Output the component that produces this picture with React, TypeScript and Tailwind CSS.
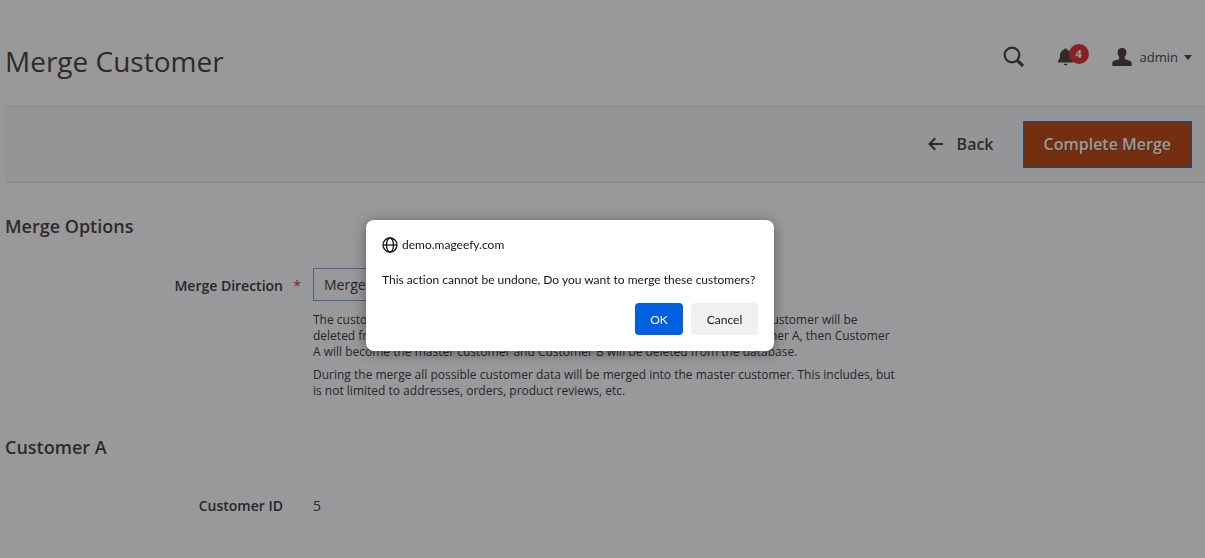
import { useState } from "react";

const SearchIcon = () => (
  <svg width="22" height="22" viewBox="0 0 22 22" fill="none" stroke="currentColor" aria-hidden="true">
    <circle cx="9" cy="9" r="7.3" strokeWidth="2.2" />
    <path d="M14.3 14.3 20 20" strokeWidth="3.2" />
  </svg>
);

const BellIcon = () => (
  <svg width="16" height="18" viewBox="0 0 16 18" fill="currentColor" aria-hidden="true">
    <path d="M7.5 .4c.8 0 1.300.5 1.300 1.200 2.600.7 3.900 2.600 4.100 5.200.2 3.200.7 4.900 2.400 6.500.5.500.2 1.300-.5 1.300H.2c-.7 0-1-.8-.5-1.300C1.400 11.700 1.900 10 2.100 6.800c.2-2.600 1.500-4.500 4.100-5.200 0-.7.500-1.200 1.300-1.200z" />
    <path d="M5.700 15.800h3.800a1.900 1.700 0 0 1-3.800 0z" />
  </svg>
);

const UserIcon = () => (
  <svg width="20" height="18" viewBox="0 0 20 18" fill="currentColor" aria-hidden="true">
    <path d="M10 0c2.800 0 4.400 1.700 4.400 4.500 0 1.400-.3 2.300-.9 3.300-.5.9-.8 1.300-.8 2.100 0 1 .7 1.500 2 1.900l3.100 1c1.300.5 1.900 1.400 1.900 2.700V18H.3v-2.500c0-1.300.6-2.200 1.900-2.700l3.100-1c1.300-.4 2-.9 2-1.900 0-.8-.3-1.200-.8-2.100-.6-1-.9-1.900-.9-3.300C5.600 1.700 7.200 0 10 0z" />
  </svg>
);

const ArrowIcon = () => (
  <svg width="16" height="14" viewBox="0 0 16 14" fill="none" stroke="currentColor" strokeWidth="2" aria-hidden="true">
    <path d="M1.500 7H15M7.300 1.200 1.500 7l5.800 5.800" />
  </svg>
);

const GlobeIcon = () => (
  <svg width="16" height="16" viewBox="0 0 16 16" fill="none" stroke="currentColor" strokeWidth="1.3" aria-hidden="true">
    <circle cx="8" cy="8" r="7" />
    <ellipse cx="8" cy="8" rx="3.5" ry="7" />
    <path d="M1 8h14" />
  </svg>
);

const PageHeader = () => (
  <header className="flex h-[106px] items-center justify-between pr-[13px]">
    <h1 className="pt-4 text-[28px] leading-9">Merge Customer</h1>
    <div className="flex items-center pt-2">
      <button type="button" aria-label="Search" className="mr-[33px]">
        <SearchIcon />
      </button>
      <a href="#notifications" aria-label="Notifications" className="relative mr-[38px]">
        <BellIcon />
        <span className="absolute -top-1 left-[11px] flex size-5 items-center justify-center rounded-full bg-[#e22626] text-[11px] font-bold text-white">
          4
        </span>
      </a>
      <button type="button" className="flex items-center text-[13px] leading-5">
        <UserIcon />
        <span className="ml-2">admin</span>
        <svg className="ml-[6px]" width="8" height="5" viewBox="0 0 8 5" fill="currentColor" aria-hidden="true">
          <path d="M0 0h8L4 5z" />
        </svg>
      </button>
    </div>
  </header>
);

const PageActions = ( { onComplete }: { onComplete: () => void; } ) => (
  <div className="flex items-center justify-end gap-[29px] border-y border-[#e3e3e3] bg-[#f8f8f8] py-[14px] pr-[13px] text-base font-semibold">
    <button type="button" className="flex h-[47px] items-center gap-[13px] pb-[2px]">
      <ArrowIcon />
      Back
    </button>
    <button
      type="button"
      onClick={ onComplete }
      className="h-[47px] border border-[#007bdb] bg-[#ba4000] px-5 pb-[2px] text-white [text-shadow:1px_1px_0_rgba(0,0,0,0.25)]"
    >
      Complete Merge
    </button>
  </div>
);

const ConfirmDialog = ( { onClose }: { onClose: () => void; } ) => (
  <div className="fixed inset-0 flex items-start justify-center bg-[#1c1b22]/45 pt-[220px] pr-[65px]">
    <div
      role="alertdialog"
      aria-modal="true"
      aria-labelledby="confirm-host"
      aria-describedby="confirm-message"
      className="w-[408px] rounded-lg bg-white p-4 font-[Lato,sans-serif] text-xs text-[#15141a] [font-variant-ligatures:none] shadow-[0_2px_14px_rgba(0,0,0,0.4)]"
    >
      <div className="flex items-center gap-1 pt-px leading-4">
        <GlobeIcon />
        <span id="confirm-host">demo.mageefy.com</span>
      </div>
      <p id="confirm-message" className="mt-[19px] leading-4 whitespace-nowrap">
        This action cannot be undone, Do you want to merge these customers?
      </p>
      <div className="mt-[15px] flex justify-end gap-2">
        <button type="button" onClick={ onClose } className="h-8 w-12 rounded bg-[#0061e0] pt-[2px] text-white">
          OK
        </button>
        <button type="button" onClick={ onClose } className="h-8 w-[67px] rounded bg-[#f0f0f2] pt-[2px]">
          Cancel
        </button>
      </div>
    </div>
  </div>
);

export default function App() {
  const [ confirming, setConfirming ] = useState( true );

  return (
    <div className="min-h-screen bg-white pl-[5px] font-['Open_Sans',sans-serif] text-[#41362f]">
      <PageHeader />
      <PageActions onComplete={ () => setConfirming( true ) } />

      <main>
        <section className="pt-[31px]">
          <h2 className="text-lg leading-6 font-semibold">Merge Options</h2>
          <div className="mt-[30px] grid grid-cols-[278px_1fr] gap-[30px] text-sm text-[#303030]">
            <label htmlFor="direction" className="relative pt-2 text-right leading-5 font-semibold">
              Merge Direction
              <span className="absolute top-2 -right-[18px] font-normal text-[#e22626]">*</span>
            </label>
            <div className="max-w-[586px]">
              <select
                id="direction"
                className="h-[33px] w-3/4 appearance-none border border-[#71a5da] bg-white px-[10px]"
              >
                <option>Merge Customer B into Customer A</option>
                <option>Merge Customer A into Customer B</option>
              </select>
              <p className="mt-[11px] text-xs leading-4">
                The customer you merge into will be kept as the master customer, and the other customer will be
                deleted from the database. For example, when you merge Customer B into Customer A, then Customer
                A will become the master customer and Customer B will be deleted from the database.
              </p>
              <p className="mt-[7px] text-xs leading-4">
                During the merge all possible customer data will be merged into the master customer. This includes, but
                is not limited to addresses, orders, product reviews, etc.
              </p>
            </div>
          </div>
        </section>

        <section className="pt-9">
          <h2 className="text-lg leading-6 font-semibold">Customer A</h2>
          <dl className="mt-[37px] grid grid-cols-[278px_1fr] gap-[30px] text-sm leading-5 text-[#303030]">
            <dt className="text-right font-semibold">Customer ID</dt>
            <dd>5</dd>
          </dl>
        </section>
      </main>

      { confirming && <ConfirmDialog onClose={ () => setConfirming( false ) } /> }
    </div>
  );
}
